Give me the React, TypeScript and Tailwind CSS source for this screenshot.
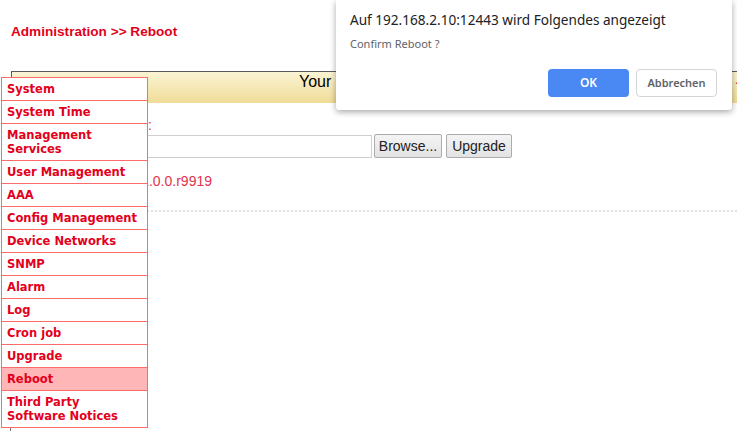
const menu = [
  ["System"],
  ["System Time"],
  ["Management", "Services"],
  ["User Management"],
  ["AAA"],
  ["Config Management"],
  ["Device Networks"],
  ["SNMP"],
  ["Alarm"],
  ["Log"],
  ["Cron job"],
  ["Upgrade"],
  ["Reboot"],
  ["Third Party", "Software Notices"],
];

const App = () => {
  return (
    <div className="relative w-[737px] h-[431px] overflow-hidden bg-white font-['Liberation_Sans',Arial,sans-serif]">
      {/* Page header */}
      <div className="h-[71px] pt-[22px] pl-[11px] text-[13.6px] font-bold text-[#e3001b]">
        Administration &gt;&gt; Reboot
      </div>

      {/* Status banner */}
      <div className="ml-[11px] w-[735px] h-[32px] flex items-start border-t border-l border-[#5a5a5a] bg-gradient-to-b from-[#fbf4d4] to-[#efdc96]">
        <span className="pl-[287px] pt-[1px] text-[16px] leading-[18px] text-black whitespace-nowrap">
          Your device is rebooting now, please wait
        </span>
        <span className="ml-auto mr-[2px] pt-[3px] text-[11px] leading-[14px] font-bold text-[#e3001b]">◀</span>
      </div>

      {/* Upgrade form */}
      <div className="pl-[11px] pt-[14px]">
        <div className="w-[141px] text-right text-[14px] leading-[16px] text-[#e3334f] whitespace-nowrap overflow-hidden">
          Select firmware file:
        </div>
        <div className="mt-[1px] flex items-center gap-[2px] h-[24px]">
          <div className="w-[361px] h-[23px] border border-[#cfcfcf] bg-white" />
          <button className="h-[24px] w-[68px] border border-[#acacac] rounded-[2px] bg-gradient-to-b from-[#f4f4f4] to-[#e3e3e3] text-[14px] text-[#222]">
            Browse...
          </button>
          <button className="ml-[2px] h-[24px] w-[66px] border border-[#acacac] rounded-[2px] bg-gradient-to-b from-[#f4f4f4] to-[#e3e3e3] text-[14px] text-[#222]">
            Upgrade
          </button>
        </div>
        <div className="mt-[15px] w-[201px] text-right text-[14px] leading-[16px] text-[#e3334f] whitespace-nowrap overflow-hidden">
          Current Version: V1.0.0.r9919
        </div>
        <div className="mt-[21px] border-t-2 border-dotted border-[#e2e2e2]" />
        <div className="ml-[-1px] mt-[214px] w-px h-[6px] bg-[#777]" />
      </div>

      {/* Dropdown menu */}
      <div className="absolute left-[1px] top-[77px] w-[147px] border-t border-l border-r border-[#ff6b6b] bg-white font-['DejaVu_Sans',Verdana,sans-serif]">
        {menu.map((lines) => (
          <div
            key={lines[0]}
            className={`border-b border-[#ff6b6b] pl-[5px] py-[4px] text-[11.5px] leading-[14px] font-bold text-[#e3001b] ${
              lines[0] === "Reboot" ? "bg-[#ffb6b6]" : "bg-white"
            }`}
          >
            {lines.map((l) => (
              <div key={l}>{l}</div>
            ))}
          </div>
        ))}
      </div>

      {/* Browser confirm dialog */}
      <div className="absolute left-[336px] top-0 w-[396px] h-[110px] bg-white rounded-b-[3px] shadow-[0_2px_6px_rgba(0,0,0,0.35)] font-['Noto_Sans',sans-serif]">
        <div className="pl-[14px] pt-[10px] text-[13.6px] leading-[20px] text-[#202124]">
          Auf 192.168.2.10:12443 wird Folgendes angezeigt
        </div>
        <div className="pl-[14px] mt-[6px] text-[11px] leading-[16px] text-[#5f6368]">Confirm Reboot ?</div>
        <div className="mt-[17px] pr-[15px] flex justify-end gap-[7px]">
          <button className="w-[81px] h-[28px] rounded-[4px] bg-[#4a89f3] text-[12px] font-semibold text-white">
            OK
          </button>
          <button className="w-[81px] h-[28px] rounded-[4px] border border-[#d5d5d5] bg-white text-[11px] font-semibold text-[#5f6368]">
            Abbrechen
          </button>
        </div>
      </div>
    </div>
  );
};

export default App;
